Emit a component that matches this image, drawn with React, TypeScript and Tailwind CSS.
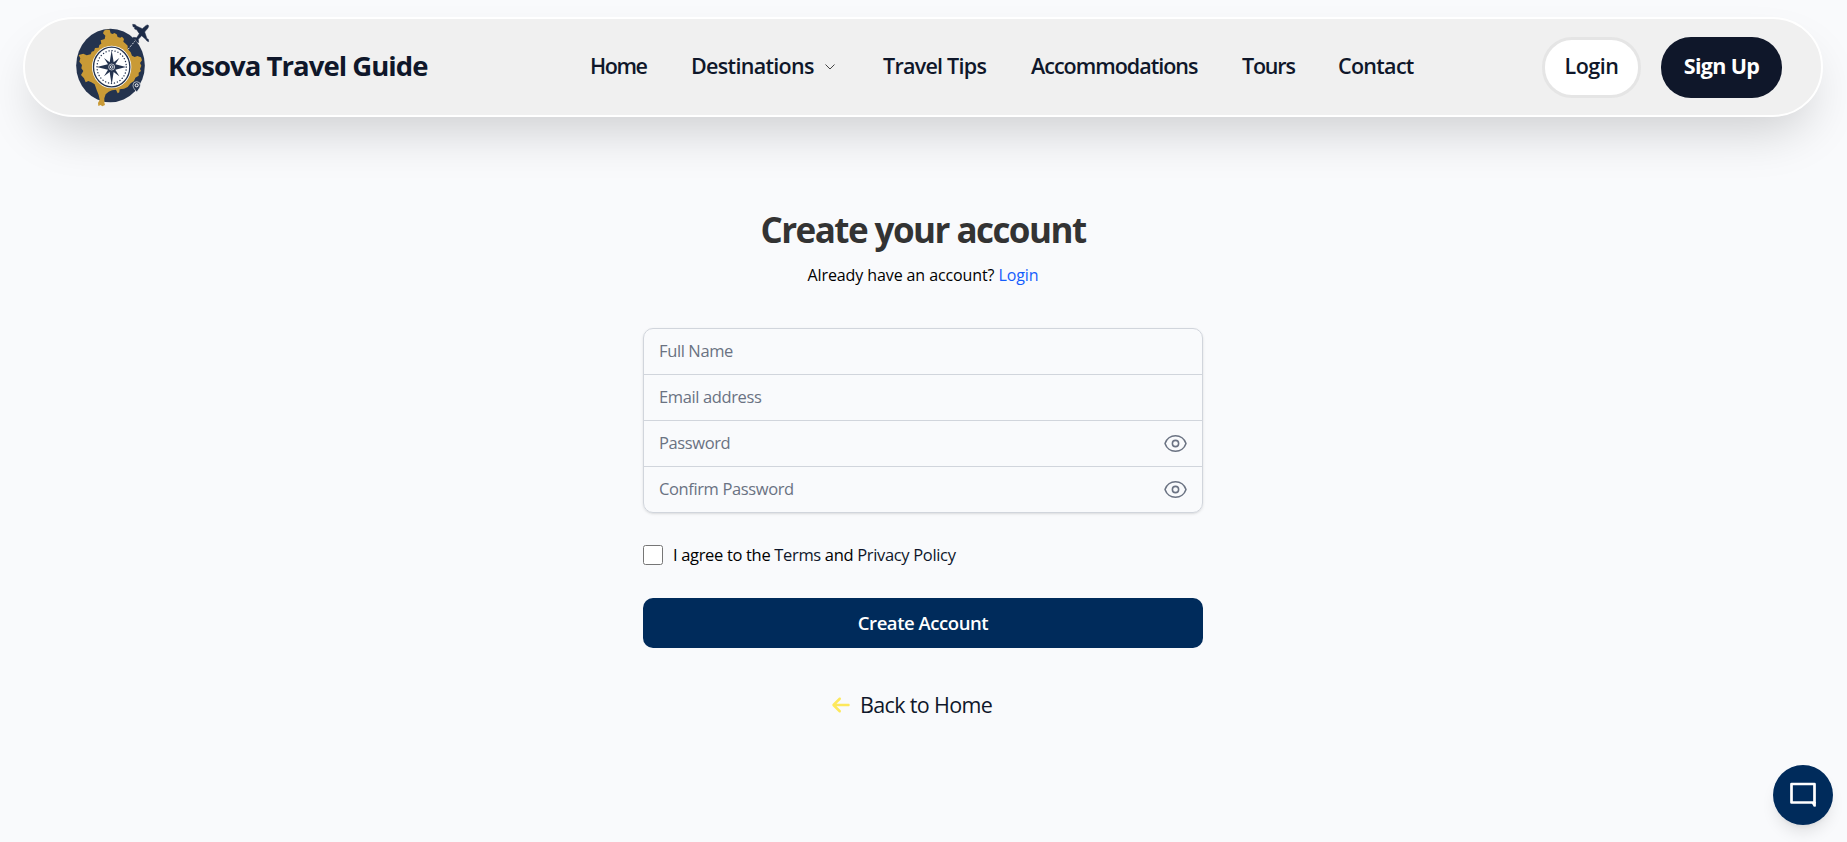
import { HiOutlineEye } from "react-icons/hi2";
import { FaArrowLeft } from "react-icons/fa6";

function Logo() {
  return (
    <svg viewBox="45 18 225 258" className="-mt-1.5 h-[86px] w-[75px] shrink-0" aria-hidden="true">
      <ellipse cx="151.500" cy="151.500" rx="103" ry="110" fill="#24334e" />
      <path
        fill="#c99a36"
        d="M132 47L138 44 149 44 152 55 158 57 163 54 170 58 173 66 181 68 186 65 192 72 190 80 197 86 203 92 203 102 212 112 216 122 224 126 232 123 243 127 246 136 240 144 244 152 240 162 243 168 236 173 236 182 226 188 222 198 212 205 203 216 192 221 179 223 178 232 173 235 168 224 156 226 146 230 137 238 133 250 133 262 135 270 127 274 122 270 115 273 114 264 119 254 116 240 110 225 104 208 94 202 85 198 77 202 72 190 63 180 70 168 64 160 66 150 58 140 61 130 56 120 70 116 80 121 92 118 95 110 102 108 105 99 116 98 118 90 124 86 122 76 134 72 136 62 129 55Z"
      />
      <ellipse cx="155" cy="156" rx="59" ry="64" fill="#fff" />
      <ellipse cx="155" cy="156" rx="54.500" ry="59.500" fill="none" stroke="#24334e" strokeWidth="4" />
      <ellipse cx="155" cy="156" rx="44" ry="49" fill="none" stroke="#24334e" strokeWidth="4" strokeLinecap="round" strokeDasharray="0.5 8.620" />
      <path fill="#24334e" d="M155 106l6 36 17-13-12 19 32 8-32 8 12 20-17-13-6 38-6-38-17 13 12-20-34-8 34-8-12-19 17 13z" />
      <circle cx="155" cy="156" r="9" fill="#24334e" stroke="#fff" strokeWidth="2" />
      <circle cx="155" cy="156" r="4" fill="none" stroke="#fff" strokeWidth="2.500" />
      <path d="M204 103l21-25" stroke="#fff" strokeWidth="2.500" strokeDasharray="6 4" fill="none" />
      <path
        fill="#1c2a46"
        stroke="#1c2a46"
        strokeWidth="1.500"
        d="M265 31c3 4-2 10-7 15l-4 5 7 20 4 2 1 7-5-2-4-5-12-11-10 11 1 10-5-2-4-7-8-3 1-4 10 1 8-12-8-12-6-2 0-5-5-2-1-7 8 1 3 4 18 8 7-6c4-4 9-7 11-4z"
      />
      <path d="M230 231c-4-6-11-12-11-20a11 11 0 0 1 22 0c0 8-7 14-11 20z" fill="#24334e" stroke="#e9ebee" strokeWidth="2" />
      <circle cx="230" cy="211" r="4.500" fill="#24334e" stroke="#fff" strokeWidth="3" />
    </svg>
  );
}

function Header() {
  return (
    <header className="mx-auto flex h-[100px] w-[1800px] items-center rounded-[50px] border-2 border-white bg-[#f0f0f0] pr-[39px] pl-[50px] text-[#0f172a] shadow-[0_25px_50px_-12px_rgba(0,0,0,0.18)]">
      <a href="#" className="flex w-[515px] items-center gap-[18px]">
        <Logo />
        <span className="pb-[3px] text-[27.5px] font-bold tracking-[-0.97px]">Kosova Travel Guide</span>
      </a>
      <nav className="flex flex-1 items-center pb-0.5 text-[21.5px] font-semibold">
        <a href="#" className="w-[101px] tracking-[-1.4px]">Home</a>
        <a href="#" className="flex w-[192px] items-center">
          <span className="w-[133px] tracking-[-0.68px]">Destinations</span>
          <svg viewBox="0 0 12 8" className="mt-0.5 h-2 w-3 fill-none stroke-[#444]"><path d="M1.500 1.500 6 6l4.500-4.500" /></svg>
        </a>
        <a href="#" className="w-[148px] tracking-[-0.75px]">Travel Tips</a>
        <a href="#" className="w-[211px] tracking-[-1px]">Accommodations</a>
        <a href="#" className="w-[96px] tracking-[-1.2px]">Tours</a>
        <a href="#" className="tracking-[-0.7px]">Contact</a>
      </nav>
      <div className="flex shrink-0 gap-5 text-[21.5px]">
        <button className="h-[61px] w-[99px] rounded-[30px] border-3 border-[#e5e5e5] bg-white pb-0.5 font-semibold tracking-[-0.5px]">Login</button>
        <button className="h-[61px] w-[121px] rounded-[30px] bg-[#0f172a] pb-0.5 font-bold tracking-[-0.67px] text-white">Sign Up</button>
      </div>
    </header>
  );
}

function Field({ label, secret = false }: { label: string; secret?: boolean }) {
  return (
    <div className="flex h-[46px] items-center justify-between border-b border-gray-300 pr-[14px] pl-[15px] last:h-[45px] last:border-b-0">
      <input
        type={secret ? "password" : "text"}
        placeholder={label}
        className="w-[300px] bg-transparent text-[16.5px] tracking-[-0.38px] outline-none placeholder:text-gray-500"
      />
      {secret && <HiOutlineEye className="size-[25px] text-gray-500" />}
    </div>
  );
}

export default function App() {
  return (
    <div className="flex h-[842px] flex-col overflow-hidden bg-[#f9fafc] pt-[17px] pr-px font-['Open_Sans',sans-serif] whitespace-nowrap">
      <Header />
      <main className="mx-auto flex w-[560px] flex-col">
        <h1 className="mt-[88px] h-[50px] text-center text-[35px] leading-[50px] font-bold tracking-[-1.55px] text-[#333]">Create your account</h1>
        <p className="mt-[8px] text-center text-[16px] leading-6 tracking-[-0.1px] text-black">
          Already have an account? <a href="#" className="font-medium text-blue-600">Login</a>
        </p>
        <form className="mt-[41px] flex flex-col">
          <div className="rounded-[10px] border border-gray-300 shadow-sm">
            <Field label="Full Name" />
            <Field label="Email address" />
            <Field label="Password" secret />
            <Field label="Confirm Password" secret />
          </div>
          <label className="mt-8 flex h-5 items-center gap-[10px] text-[16.5px] tracking-[-0.33px] text-black">
            <input type="checkbox" className="size-5" />
            <span>I agree to the <a href="#" className="text-[#0f172a]">Terms</a> and <a href="#" className="text-[#0f172a]">Privacy Policy</a></span>
          </label>
          <button type="button" className="mt-[33px] h-[50px] rounded-[10px] bg-[#002b5b] text-[18.5px] font-semibold tracking-[-0.45px] text-white">Create Account</button>
        </form>
        <a href="#" className="mt-[41px] ml-[188px] flex h-8 items-center gap-[9px] text-[21.5px] font-medium tracking-[-0.65px] text-[#0f172a]">
          <FaArrowLeft className="size-5 text-[#fde85c]" />
          Back to Home
        </a>
      </main>
      <button className="fixed right-[14px] bottom-[17px] flex size-[60px] items-center justify-center rounded-full bg-[#002b5b] text-white shadow-lg">
        <svg viewBox="0 0 28 26" className="h-[26px] w-7" aria-hidden="true">
          <path d="M2.500 2h23v18.500h-23z" fill="none" stroke="currentColor" strokeWidth="2.700" strokeLinejoin="round" />
          <path d="M22 20h4.850v4.500l-2 .3z" fill="currentColor" />
        </svg>
      </button>
    </div>
  );
}
